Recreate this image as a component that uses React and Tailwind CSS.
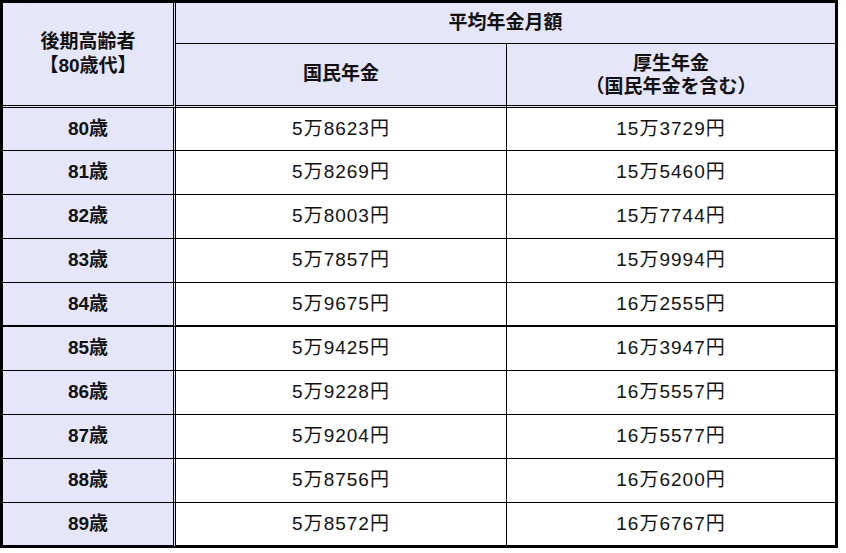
import React from "react";

const rows = [
  ["80歳", "5万8623円", "15万3729円"],
  ["81歳", "5万8269円", "15万5460円"],
  ["82歳", "5万8003円", "15万7744円"],
  ["83歳", "5万7857円", "15万9994円"],
  ["84歳", "5万9675円", "16万2555円"],
  ["85歳", "5万9425円", "16万3947円"],
  ["86歳", "5万9228円", "16万5557円"],
  ["87歳", "5万9204円", "16万5577円"],
  ["88歳", "5万8756円", "16万6200円"],
  ["89歳", "5万8572円", "16万6767円"],
];

// heights include bottom border (border-box)
const hClass = ["h-[43px]", "h-[44px]", "h-[44px]", "h-[44px]", "h-[44px]", "h-[44px]", "h-[44px]", "h-[44px]", "h-[44px]", "h-[45px]"];

export default function App() {
  return (
    <div className="bg-white w-[846px] h-[553px] text-[#111]" style={{ fontFamily: '"Liberation Sans", "Noto Sans CJK JP", sans-serif' }}>
      <table className="border-separate border-spacing-0 border-t-[3px] border-l-[3px] border-black w-[838px] table-fixed text-[19px]">
        <colgroup>
          <col className="w-[173px]" />
          <col className="w-[331px]" />
          <col className="w-[331px]" />
        </colgroup>
        <thead>
          <tr>
            <th rowSpan={2} className="bg-[#e6e6fa] border-r-[3px] border-b-[3px] border-double border-black font-bold leading-[24px] p-0 align-middle">
              後期高齢者<br />【80歳代】
            </th>
            <th colSpan={2} className="bg-[#e6e6fa] h-[41px] border-b border-r-[3px] border-solid border-black font-bold p-0 align-middle">
              平均年金月額
            </th>
          </tr>
          <tr>
            <th className="bg-[#e6e6fa] h-[64px] border-r border-b-[3px] border-black font-bold p-0 align-middle [border-bottom-style:double] [border-right-style:solid]">
              国民年金
            </th>
            <th className="bg-[#e6e6fa] h-[64px] border-r-[3px] border-b-[3px] border-black font-bold p-0 leading-[23px] align-middle [border-bottom-style:double] [border-right-style:solid]">
              厚生年金<br />（国民年金を含む）
            </th>
          </tr>
        </thead>
        <tbody>
          {rows.map((r, i) => {
            const last = i === rows.length - 1;
            const thick = i === 4;
            const bb = last ? "border-b-[3px]" : thick ? "border-b-2" : "border-b";
            return (
              <tr key={i}>
                <td className={`bg-[#e6e6fa] ${hClass[i]} ${bb} border-r-[3px] border-black text-center font-bold p-0 [border-right-style:double] [border-bottom-style:solid]`}>
                  {r[0]}
                </td>
                <td className={`bg-white ${bb} border-r border-black text-center p-0 tracking-[1px]`}>
                  {r[1]}
                </td>
                <td className={`bg-white ${bb} border-r-[3px] border-black text-center p-0 tracking-[1px]`}>
                  {r[2]}
                </td>
              </tr>
            );
          })}
        </tbody>
      </table>
    </div>
  );
}
